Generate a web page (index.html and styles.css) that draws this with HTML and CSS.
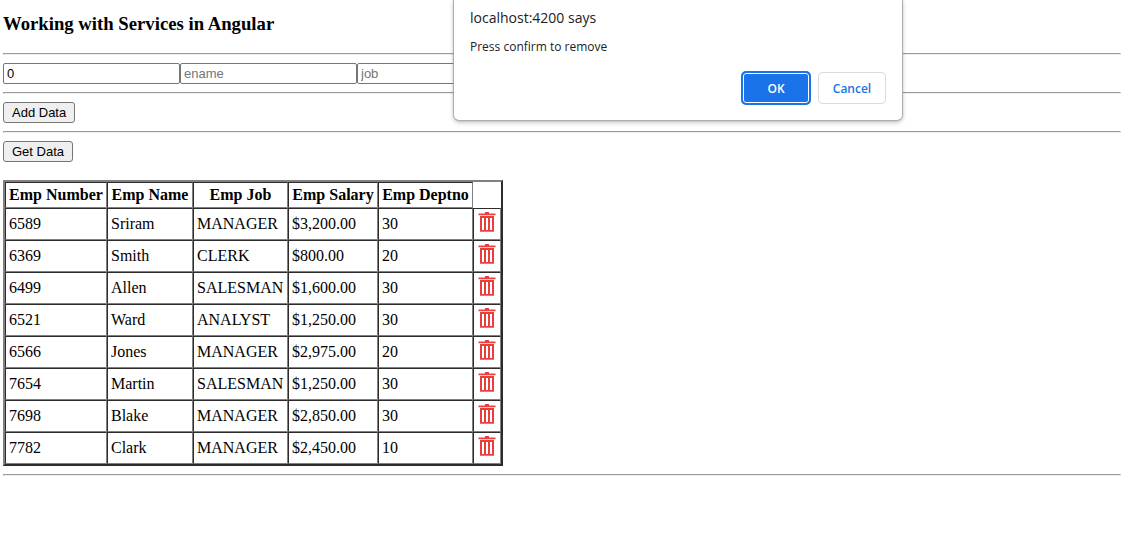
FILE: index.html
```html
<!DOCTYPE html>
<html lang="en">
<head>
<meta charset="utf-8">
<title>Working with Services in Angular</title>
<link rel="stylesheet" href="styles.css">
</head>
<body>
<svg width="0" height="0" class="sprite" aria-hidden="true">
  <symbol id="trash" viewBox="0 0 20 24">
    <path d="M1.500 1.500H8V0h4v1.500h6.500V3.300h-17z" fill="currentColor"/>
    <path fill="currentColor" fill-rule="evenodd" d="M3 4h14v15.700H3zM5 6v12h2V6zM9 6v12h2V6zM13 6v12h2V6z"/>
  </symbol>
</svg>
<h3 class="title">Working with Services in Angular</h3>
<hr class="rule">
<form class="fields">
  <input class="field" type="text" value="0" aria-label="empno">
  <input class="field" type="text" placeholder="ename" aria-label="ename">
  <input class="field" type="text" placeholder="job" aria-label="job">
</form>
<hr class="rule">
<button class="action" type="button">Add Data</button>
<hr class="rule">
<button class="action" type="button">Get Data</button>
<table class="employees" border="2" cellspacing="0" cellpadding="3">
  <colgroup>
    <col class="number"><col class="name"><col class="job"><col class="salary"><col class="deptno"><col class="tools">
  </colgroup>
  <thead>
    <tr><th>Emp Number</th><th>Emp Name</th><th>Emp Job</th><th>Emp Salary</th><th>Emp Deptno</th></tr>
  </thead>
  <tbody>
    <tr><td>6589</td><td>Sriram</td><td>MANAGER</td><td>$3,200.00</td><td>30</td><td><button class="remove" type="button" aria-label="Remove"><svg class="icon"><use href="#trash"/></svg></button></td></tr>
    <tr><td>6369</td><td>Smith</td><td>CLERK</td><td>$800.00</td><td>20</td><td><button class="remove" type="button" aria-label="Remove"><svg class="icon"><use href="#trash"/></svg></button></td></tr>
    <tr><td>6499</td><td>Allen</td><td>SALESMAN</td><td>$1,600.00</td><td>30</td><td><button class="remove" type="button" aria-label="Remove"><svg class="icon"><use href="#trash"/></svg></button></td></tr>
    <tr><td>6521</td><td>Ward</td><td>ANALYST</td><td>$1,250.00</td><td>30</td><td><button class="remove" type="button" aria-label="Remove"><svg class="icon"><use href="#trash"/></svg></button></td></tr>
    <tr><td>6566</td><td>Jones</td><td>MANAGER</td><td>$2,975.00</td><td>20</td><td><button class="remove" type="button" aria-label="Remove"><svg class="icon"><use href="#trash"/></svg></button></td></tr>
    <tr><td>7654</td><td>Martin</td><td>SALESMAN</td><td>$1,250.00</td><td>30</td><td><button class="remove" type="button" aria-label="Remove"><svg class="icon"><use href="#trash"/></svg></button></td></tr>
    <tr><td>7698</td><td>Blake</td><td>MANAGER</td><td>$2,850.00</td><td>30</td><td><button class="remove" type="button" aria-label="Remove"><svg class="icon"><use href="#trash"/></svg></button></td></tr>
    <tr><td>7782</td><td>Clark</td><td>MANAGER</td><td>$2,450.00</td><td>10</td><td><button class="remove" type="button" aria-label="Remove"><svg class="icon"><use href="#trash"/></svg></button></td></tr>
  </tbody>
</table>
<hr class="rule">

<div class="dialog" role="alertdialog" aria-labelledby="origin" aria-describedby="message">
  <div class="origin" id="origin">localhost:4200 says</div>
  <div class="message" id="message">Press confirm to remove</div>
  <div class="choices">
    <button class="choice primary" type="button">OK</button>
    <button class="choice" type="button">Cancel</button>
  </div>
</div>
</body>
</html>
```
FILE: styles.css
```css
body {
  margin: 0 0 0 3px;
  background: #fff;
  color: #000;
  font-family: "Liberation Serif", "Times New Roman", serif;
  font-size: 16px;
}

.sprite {
  position: absolute;
}

.title {
  margin: 0;
  padding: 13px 0 18px;
  line-height: 22px;
}

.rule {
  margin: 0 0 8px;
}

.fields {
  display: flex;
  margin-bottom: 8px;
}

.field,
.action {
  box-sizing: border-box;
  height: 21px;
  border: 1px solid #767676;
  font-family: "Liberation Sans", Arial, sans-serif;
  font-size: 13px;
}

.field {
  width: 177px;
  margin: 0;
  padding: 1px 3px;
  border-radius: 2px;
}

.action {
  display: block;
  margin: 0 0 8px;
  padding: 0 8px;
  border-radius: 3px;
  background: #efefef;
  color: #000;
}

.employees {
  margin: 18px 0 8px;
  line-height: 18px;
}

.number { width: 102px; }
.name { width: 86px; }
.job { width: 95px; }
.salary { width: 90px; }
.deptno { width: 95px; }
.tools { width: 28px; }

.remove {
  display: block;
  padding: 0;
  border: 0;
  background: none;
  color: #e8413d;
}

.icon {
  display: block;
  width: 20px;
  height: 24px;
}

.dialog {
  position: absolute;
  top: 0;
  left: 454px;
  box-sizing: border-box;
  width: 448px;
  padding: 8px 16px 16px;
  border-radius: 0 0 5px 5px;
  background: #fff;
  box-shadow: 0 0 1px 1px #aaa, 0 2px 5px rgba(0, 0, 0, 0.3);
  color: #202124;
  font-family: "Open Sans", "Segoe UI", sans-serif;
}

.origin {
  margin-bottom: 10px;
  font-size: 14px;
  line-height: 20px;
}

.message {
  margin-bottom: 17px;
  font-size: 12px;
  line-height: 17px;
}

.choices {
  display: flex;
  justify-content: flex-end;
  gap: 8px;
}

.choice {
  width: 68px;
  height: 32px;
  padding: 0;
  border: 1px solid #dadce0;
  border-radius: 4px;
  background: #fff;
  color: #1a73e8;
  font-family: inherit;
  font-size: 12px;
  font-weight: 600;
}

.primary {
  border-color: #1a73e8;
  background: #1a73e8;
  box-shadow: 0 0 0 1px #1a73e8, inset 0 0 0 1px #fff;
  color: #fff;
}
```
